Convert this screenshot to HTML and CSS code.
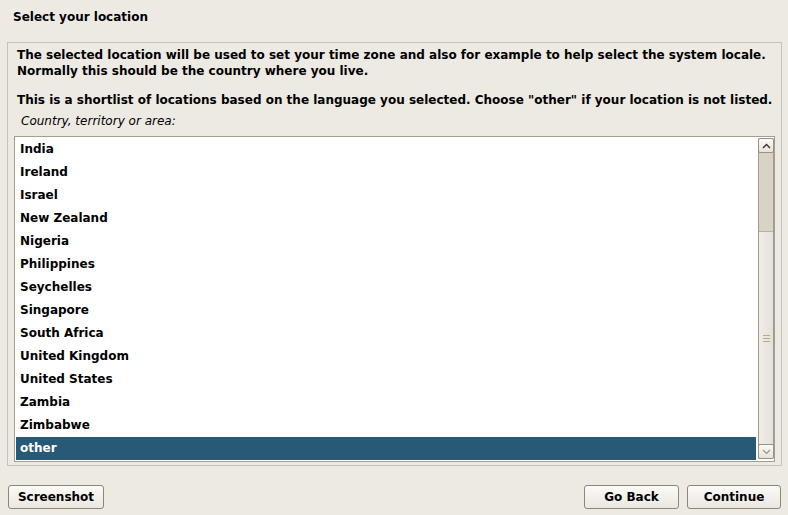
FILE: index.html
```html
<!DOCTYPE html>
<html>
<head>
<meta charset="utf-8">
<link rel="stylesheet" href="styles.css">
</head>
<body>
<div class="page">
  <div class="title">Select your location</div>
  <div class="frame">
    <p class="para">The selected location will be used to set your time zone and also for example to help select the system locale. Normally this should be the country where you live.</p>
    <p class="para second">This is a shortlist of locations based on the language you selected. Choose "other" if your location is not listed.</p>
    <div class="label">Country, territory or area:</div>
    <div class="list">
      <div class="rows">
        <div class="row">India</div>
        <div class="row">Ireland</div>
        <div class="row">Israel</div>
        <div class="row">New Zealand</div>
        <div class="row">Nigeria</div>
        <div class="row">Philippines</div>
        <div class="row">Seychelles</div>
        <div class="row">Singapore</div>
        <div class="row">South Africa</div>
        <div class="row">United Kingdom</div>
        <div class="row">United States</div>
        <div class="row">Zambia</div>
        <div class="row">Zimbabwe</div>
        <div class="row selected">other</div>
      </div>
      <div class="scrollbar">
        <div class="sbtn up"><svg width="9" height="6" viewBox="0 0 9 6"><path d="M1 5 L4.5 1.5 L8 5" fill="none" stroke="#333" stroke-width="1.4"/></svg></div>
        <div class="track"></div>
        <div class="thumb"><span class="grip"></span><span class="grip"></span><span class="grip"></span></div>
        <div class="sbtn down"><svg width="9" height="6" viewBox="0 0 9 6"><path d="M1 1 L4.5 4.5 L8 1" fill="none" stroke="#9a9384" stroke-width="1.2"/></svg></div>
      </div>
    </div>
  </div>
  <div class="buttons">
    <button class="btn shot">Screenshot</button>
    <div class="spacer"></div>
    <button class="btn back">Go Back</button>
    <button class="btn cont">Continue</button>
  </div>
</div>
</body>
</html>
```

FILE: styles.css
```css
html, body {
  margin: 0;
  padding: 0;
  background: #edeae4;
}
body {
  font-family: "DejaVu Sans", sans-serif;
  font-size: 12px;
  color: #000;
  width: 788px;
  height: 515px;
  overflow: hidden;
}
.page {
  display: flex;
  flex-direction: column;
  height: 515px;
}
.title {
  font-weight: bold;
  padding: 9px 0 0 13px;
  line-height: 16px;
  height: 34px;
  box-sizing: border-box;
}
.frame {
  margin: 8px 6px 0 7px;
  border: 1px solid #c9c1b3;
  padding: 4px 6px 3px 6px;
  height: 424px;
  box-sizing: border-box;
  display: flex;
  flex-direction: column;
}
.para {
  margin: 0 0 0 3px;
  font-weight: bold;
  line-height: 16px;
}
.second {
  margin-top: 13px;
}
.label {
  font-style: italic;
  margin: 5px 0 0 7px;
  line-height: 16px;
}
.list {
  margin-top: 7px;
  border: 1px solid #a69d8d;
  background: #fff;
  display: flex;
  height: 326px;
  padding: 1px 0 0 1px;
  box-sizing: border-box;
}
.rows {
  flex: 1;
  margin-right: 2px;
}
.row {
  height: 23px;
  line-height: 23px;
  padding-left: 4px;
  font-weight: bold;
}
.row.selected {
  background: #285a78;
  color: #fff;
}
.scrollbar {
  width: 16px;
  background: #d8d2c7;
  border-left: 1px solid #a39a8a;
  border-right: 1px solid #a39a8a;
  display: flex;
  flex-direction: column;
  margin: 0 0 2px 0;
  border-radius: 2px;
  box-sizing: border-box;
}
.sbtn {
  height: 15px;
  background: linear-gradient(#fbfaf8, #e6e2db);
  border: 1px solid #9a9182;
  margin: 0 -1px;
  border-radius: 2px;
  display: flex;
  align-items: center;
  justify-content: center;
  box-sizing: border-box;
}
.track {
  height: 78px;
}
.thumb {
  flex: 1;
  background: linear-gradient(90deg, #f0ede8, #e4e0d9);
  border-top: 1px solid #b8b0a2;
  display: flex;
  flex-direction: column;
  align-items: center;
  justify-content: center;
  gap: 2px;
}
.grip {
  display: block;
  width: 7px;
  height: 1px;
  background: #b5a98f;
}
.buttons {
  display: flex;
  margin: 19px 7px 0 8px;
  gap: 8px;
}
.spacer {
  flex: 1;
}
.btn {
  font-family: "DejaVu Sans", sans-serif;
  font-weight: bold;
  font-size: 12px;
  height: 24px;
  padding: 0;
  border: 1px solid #8f8676;
  border-radius: 3px;
  background: linear-gradient(#fbfaf8, #ebe7e0);
  color: #000;
}
.shot { width: 96px; }
.back { width: 95px; }
.cont { width: 94px; }
```
